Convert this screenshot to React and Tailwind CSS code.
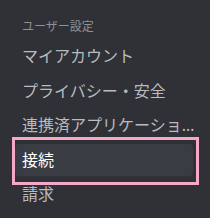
export default function App() {
  const items = ["マイアカウント", "プライバシー・安全", "連携済アプリケーション", "接続", "請求"];
  return (
    <div
      className="w-[210px] h-[218px] bg-[#2f3136] overflow-hidden pt-[19px]"
      style={{ fontFamily: '"Noto Sans", "Noto Sans CJK JP", sans-serif' }}
    >
      <div className="pl-[22px] text-[12px] leading-[16px] h-[16px] text-[#8e9297]">ユーザー設定</div>
      <div className="mt-[5px] pl-[15px] flex flex-col gap-[2.5px]">
        {items.map((t, i) => {
          const sel = i === 3;
          return (
            <div
              key={t}
              className={
                sel
                  ? "relative w-[178px] h-[32px] pl-[7px] flex items-center rounded-[4px] bg-[#393c43] text-white text-[16px] leading-[20px]"
                  : "relative w-[178px] h-[32px] pl-[7px] flex items-center rounded-[4px] text-[#b9bbbe] text-[16px] leading-[20px]"
              }
            >
              <span className="block w-[174px] shrink-0 truncate">{t}</span>
              {sel && (
                <div className="absolute -left-[3px] -top-[6.5px] -right-[6px] -bottom-[9.5px] border-[3px] border-[#f5a8c7]"></div>
              )}
            </div>
          );
        })}
      </div>
    </div>
  );
}
